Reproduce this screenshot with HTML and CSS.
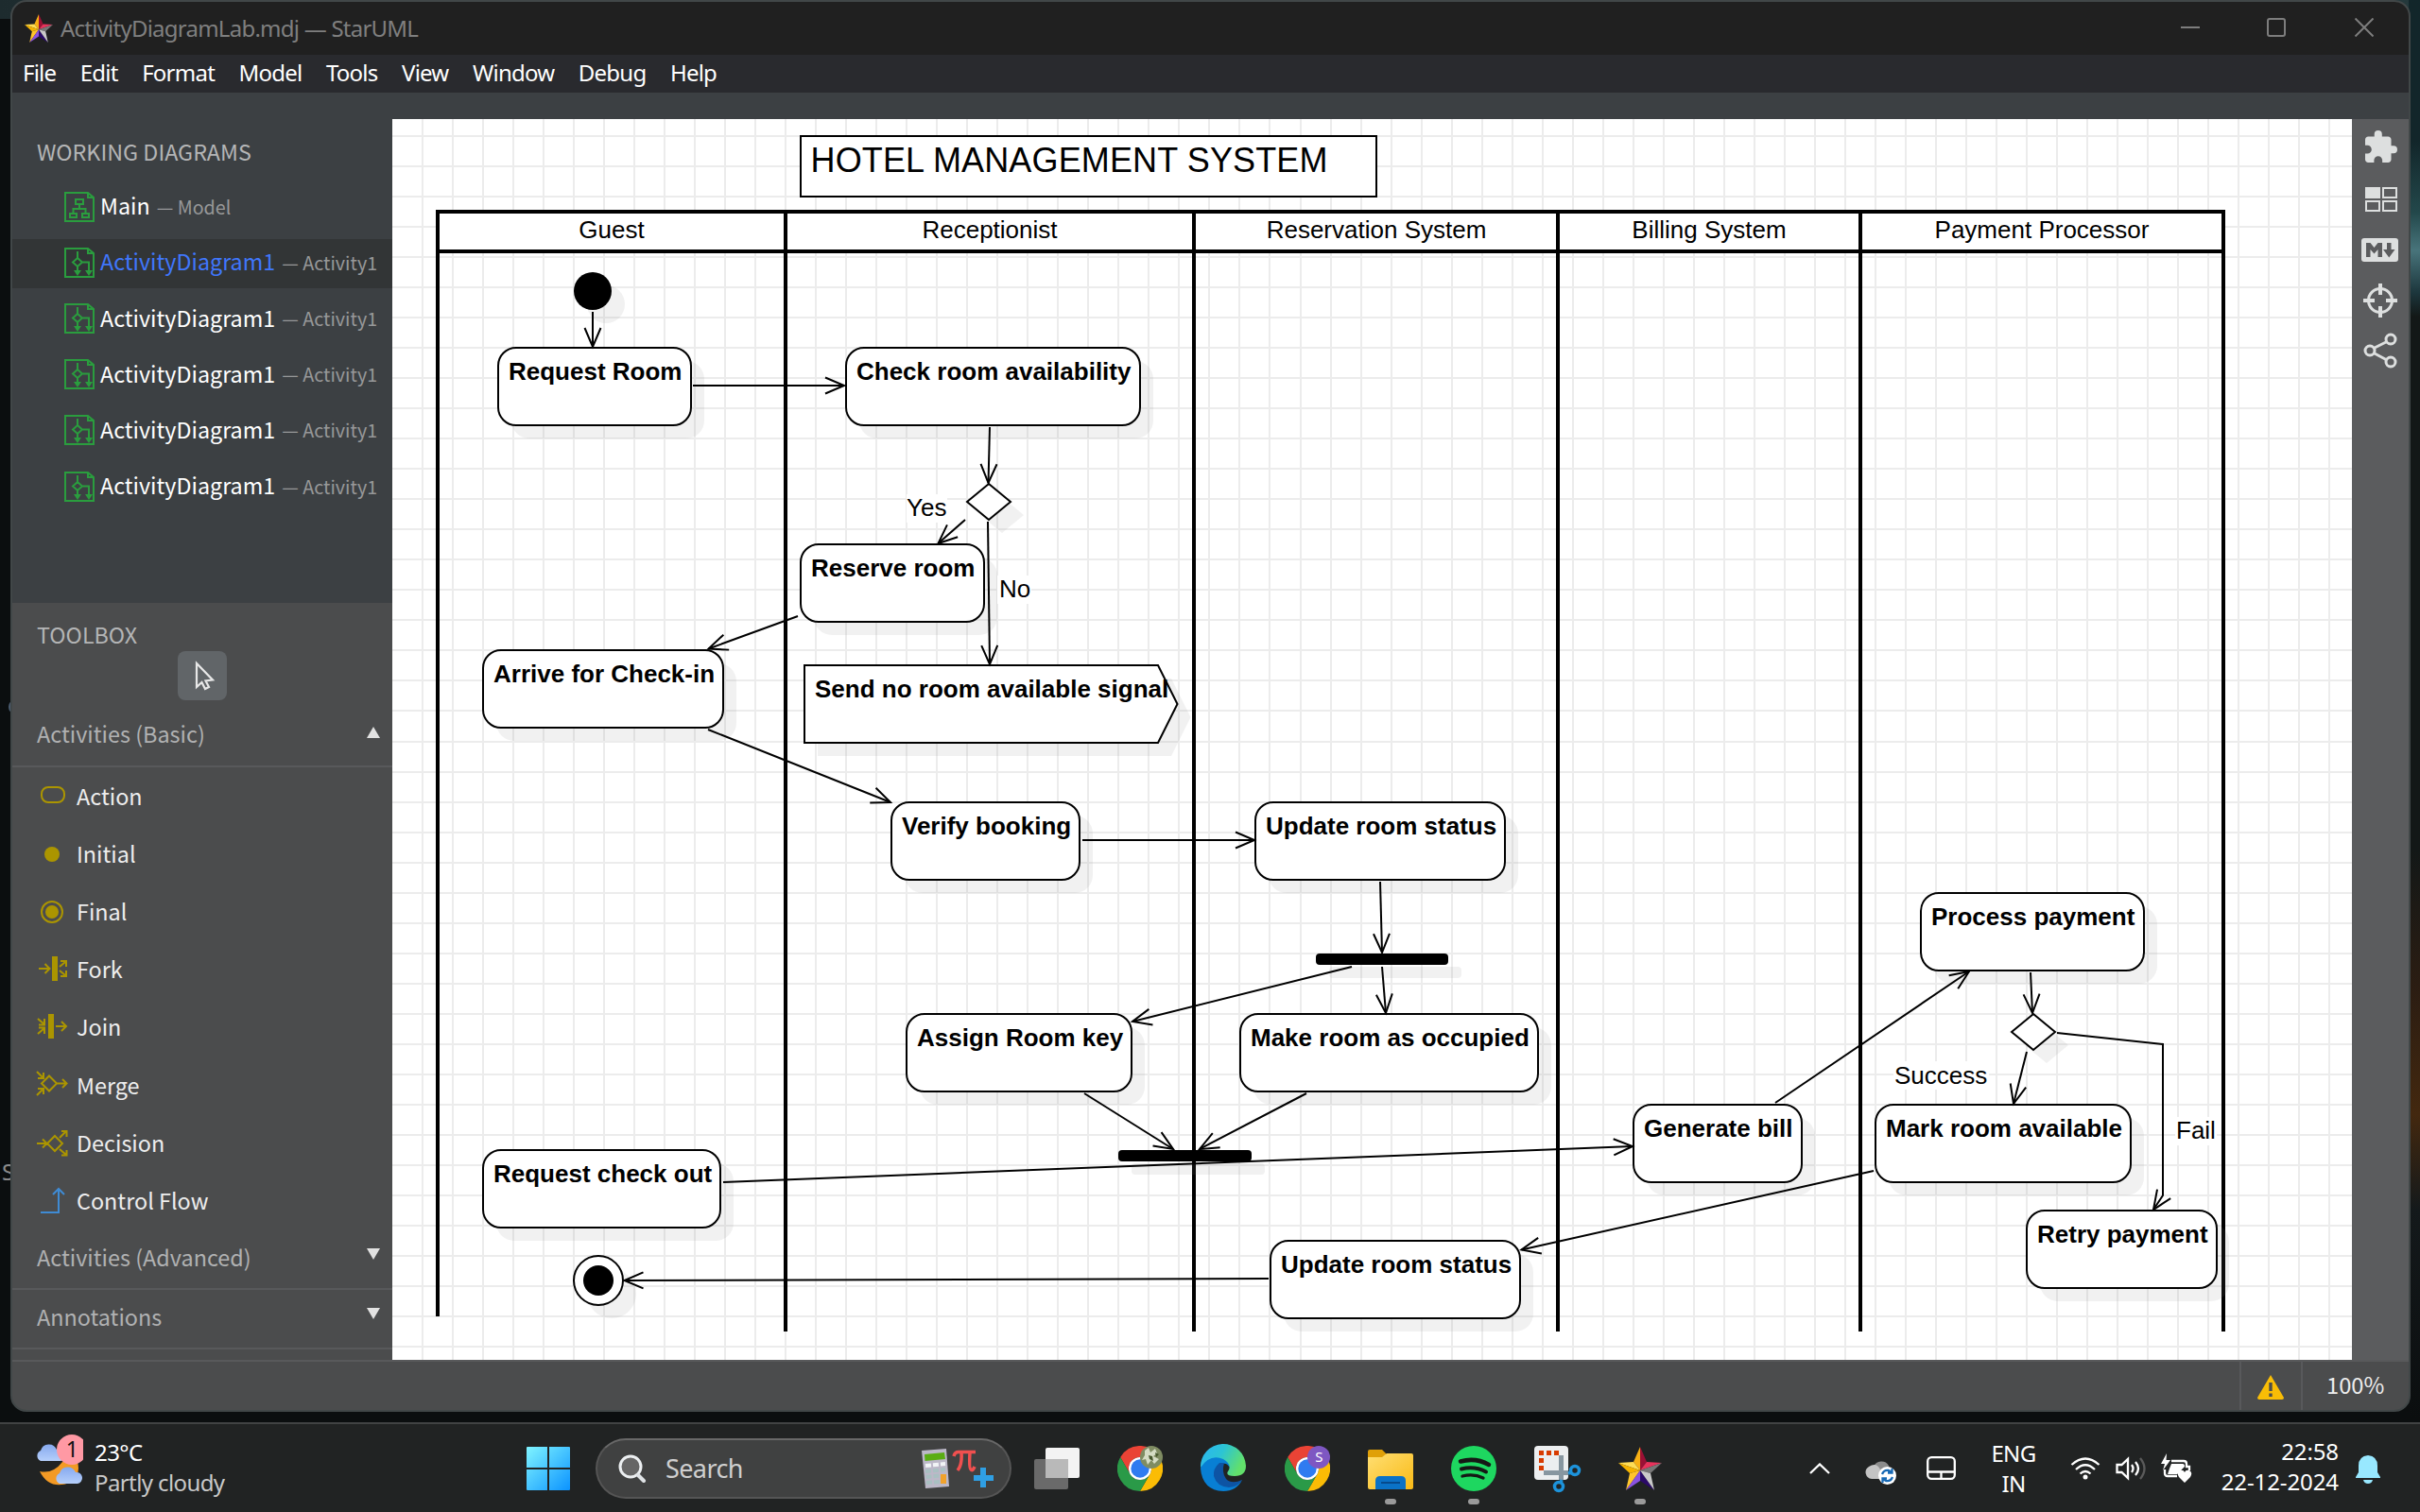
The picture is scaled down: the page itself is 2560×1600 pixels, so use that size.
FILE: index.html
```html
<!DOCTYPE html>
<html lang="en">
<head>
<meta charset="utf-8">
<title>ActivityDiagramLab.mdj — StarUML</title>
<link rel="stylesheet" href="styles.css">
</head>
<body>
<svg class="defs" width="0" height="0" aria-hidden="true">
  <defs>
    <symbol id="star" viewBox="0 0 46 46">
      <path fill="#f9b114" d="M23 0L16 16L23 25Z"/>
      <path fill="#9b1035" d="M23 0L30 16L23 25Z"/>
      <path fill="#fd5" d="M0 17L16 16L23 25Z"/>
      <path fill="#f5b400" d="M0 17L23 25L12 28Z"/>
      <path fill="#e8335c" d="M46 17L30 16L23 25Z"/>
      <path fill="#777" d="M46 17L23 25L34 28Z"/>
      <path fill="#ffc62b" d="M12 28L23 25L8 46Z"/>
      <path fill="#8a52e0" d="M8 46L23 25L23 36Z"/>
      <path fill="#2a0a68" d="M23 25L38 46L23 36Z"/>
      <path fill="#c9c9c9" d="M34 28L23 25L38 46Z"/>
    </symbol>
    <symbol id="activity" viewBox="0 0 32 32">
      <g fill="none" stroke="#2a9d3e" stroke-width="2">
        <path d="M1 1H25L31 6V31H1Z"/><path d="M25 1V6H31"/>
        <path d="M14 4V11M14 11L19 15.500L14 20L9 15.500ZM19 15.500H26V26M14 20V26"/>
      </g>
      <path fill="#2a9d3e" d="M10 24H18L14 30ZM22 24H30L26 30Z"/>
    </symbol>
    <linearGradient id="winblue" x1="0" y1="0" x2="1" y2="1"><stop offset="0" stop-color="#80f4ff"/><stop offset="1" stop-color="#0b93ff"/></linearGradient>
    <linearGradient id="cloud" x1="0" y1="0" x2="0" y2="1"><stop offset="0" stop-color="#86a9ee"/><stop offset="1" stop-color="#b5cffb"/></linearGradient>
    <linearGradient id="edgeA" x1="0" y1="0" x2="1" y2=".4"><stop offset="0" stop-color="#2ab4f5"/><stop offset=".5" stop-color="#2cc4d4"/><stop offset="1" stop-color="#62e06b"/></linearGradient>
    <linearGradient id="folder" x1="0" y1="0" x2="1" y2="1"><stop offset="0" stop-color="#ffdf73"/><stop offset="1" stop-color="#f9ba16"/></linearGradient>
    <symbol id="chrome" viewBox="0 0 48 48">
      <path fill="#ea4335" d="M3.200 12A24 24 0 0 1 44.800 12H24A12 12 0 0 0 13.600 30Z"/>
      <path fill="#fbbc05" d="M44.800 12A24 24 0 0 1 24 48L34.400 30A12 12 0 0 0 24 12Z"/>
      <path fill="#2a9a48" d="M24 48A24 24 0 0 1 3.200 12L13.600 30A12 12 0 0 0 34.400 30Z"/>
      <circle cx="24" cy="24" r="12" fill="#fff"/><circle cx="24" cy="24" r="9.700" fill="#2f7bf0"/>
    </symbol>
  </defs>
</svg>
<div class="desktop">
  <span class="peek peek-ring"></span>
  <span class="peek peek-letter">S</span>

  <section class="window">
    <header class="titlebar">
      <svg class="app-star" viewBox="0 0 46 46"><use href="#star"/></svg>
      <span class="title">ActivityDiagramLab.mdj — StarUML</span>
      <svg class="controls" viewBox="0 0 204 20"><g fill="none" stroke="#7d7d7d" stroke-width="2"><path d="M0 10H20"/><rect x="92" y="1" width="18" height="18" rx="2"/><path d="M184.500 .5L203.500 19.500M203.500 .5L184.500 19.500"/></g></svg>
    </header>
    <nav class="menu"><span>File</span><span>Edit</span><span>Format</span><span>Model</span><span>Tools</span><span>View</span><span>Window</span><span>Debug</span><span>Help</span></nav>
    <div class="strip"></div>
    <main class="workspace">
      <aside class="sidebar">
        <section class="working">
          <h2>WORKING DIAGRAMS</h2>
          <div class="diagram"><svg viewBox="0 0 32 32"><g fill="none" stroke="#2a9d3e" stroke-width="2"><path d="M1 1H25L31 6V31H1Z"/><path d="M25 1V6H31M12 8H20V13H12ZM6 23H13V27H6ZM19 23H26V27H19ZM16 13V18M9.500 23V18H22.500V23"/></g></svg><b>Main</b><i>— Model</i></div>
          <div class="diagram active"><svg><use href="#activity"/></svg><b>ActivityDiagram1</b><i>— Activity1</i></div>
          <div class="diagram"><svg><use href="#activity"/></svg><b>ActivityDiagram1</b><i>— Activity1</i></div>
          <div class="diagram"><svg><use href="#activity"/></svg><b>ActivityDiagram1</b><i>— Activity1</i></div>
          <div class="diagram"><svg><use href="#activity"/></svg><b>ActivityDiagram1</b><i>— Activity1</i></div>
          <div class="diagram"><svg><use href="#activity"/></svg><b>ActivityDiagram1</b><i>— Activity1</i></div>
        </section>
        <section class="toolbox">
          <h2>TOOLBOX</h2>
          <div class="pointer"><svg viewBox="0 0 52 52"><path d="M20 13V38L25.500 33L29 40L33 38L29.500 31.500L37 30.500Z" fill="none" stroke="#e8e8e8" stroke-width="2.200"/></svg></div>
          <div class="group open"><span>Activities (Basic)</span><svg viewBox="0 0 14 12"><path d="M7 0L14 12H0Z"/></svg></div>
          <div class="tools">
            <div class="tool"><svg viewBox="0 0 32 30"><rect x="5" y="5" width="24" height="16" rx="7"/></svg><span>Action</span></div>
            <div class="tool"><svg viewBox="0 0 32 30"><circle class="solid" cx="16" cy="15" r="8"/></svg><span>Initial</span></div>
            <div class="tool"><svg viewBox="0 0 32 30"><circle cx="16" cy="15" r="11"/><circle class="solid" cx="16" cy="15" r="7"/></svg><span>Final</span></div>
            <div class="tool"><svg viewBox="0 0 32 30"><path d="M2 14H13M8.500 9L13.500 14L8.500 19M24 12L30 7M25 6H31V12M24 16L30 21M25 22H31V16"/><path class="solid" d="M16 1H22V27H16Z"/></svg><span>Fork</span></div>
            <div class="tool"><svg viewBox="0 0 32 30"><path d="M1 6L8 12M8 6V12.500H2M1 22L8 16M8 22V15.500H2M20 14H31M26 9L31 14L26 19"/><path class="solid" d="M12 1H18V27H12Z"/></svg><span>Join</span></div>
            <div class="tool"><svg viewBox="0 0 32 30"><path d="M13 4.500L21 12.500L13 20.500L5 12.500ZM21 12.500H31M27 8L31.500 12.500L27 17M0 0L6 6M7 1V7H1M0 25L6 19M7 24V18H1"/></svg><span>Merge</span></div>
            <div class="tool"><svg viewBox="0 0 32 30"><path d="M19 7L27 15L19 23L11 15ZM0 15H11M6 10.500L10.500 15L6 19.500M24 9L31 2M26 2H31.500V8M24 21L31 27M26 27.500H31.500V22"/></svg><span>Decision</span></div>
            <div class="tool flow"><svg viewBox="0 0 32 30"><path d="M4 27H23V2M17 8L23 2L29 8"/></svg><span>Control Flow</span></div>
          </div>
          <div class="group"><span>Activities (Advanced)</span><svg viewBox="0 0 14 12"><path d="M0 0H14L7 12Z"/></svg></div>
          <div class="group"><span>Annotations</span><svg viewBox="0 0 14 12"><path d="M0 0H14L7 12Z"/></svg></div>
        </section>
      </aside>

      <svg class="canvas" viewBox="415 126 2073 1313">
        <defs><marker id="open" markerUnits="userSpaceOnUse" markerWidth="26" markerHeight="24" refX="21" refY="12" orient="auto"><path d="M1 3.500L21 12L1 20.500" fill="none" stroke="#000" stroke-width="2"/></marker></defs>
        <rect x="415" y="126" width="2073" height="1313" fill="#fff"/>
        <g stroke="#ececec" shape-rendering="crispEdges">
          <line x1="446" y1="782.500" x2="2488" y2="782.500" stroke-width="1313" stroke-dasharray="2 30.0175"/>
          <line x1="1451.500" y1="143" x2="1451.500" y2="1439" stroke-width="2073" stroke-dasharray="2 30.025"/>
        </g>
        <rect x="847" y="144" width="609" height="64" class="box"/>
        <text x="857.500" y="182" class="heading">HOTEL MANAGEMENT SYSTEM</text>
        <rect x="463" y="224" width="1889" height="42" fill="#fff"/>
        <path class="lanes" d="M463 1393V224H2352V1409M463 266H2352M831 224V1409M1263 224V1409M1648 224V1409M1968 224V1409"/>
        <g class="lane-name">
          <text x="647" y="252">Guest</text><text x="1047" y="252">Receptionist</text><text x="1456" y="252">Reservation System</text><text x="1808" y="252">Billing System</text><text x="2160" y="252">Payment Processor</text>
        </g>
        <g class="shade">
          <circle cx="641" cy="322" r="20"/><circle cx="647" cy="1369" r="26"/>
          <rect x="541" y="382" width="204" height="82" rx="19"/><rect x="909" y="382" width="311" height="82" rx="19"/><rect x="861" y="590" width="194" height="82" rx="19"/><rect x="525" y="702" width="254" height="82" rx="19"/>
          <path d="M865 718H1239L1259.500 759L1239 800H865Z"/>
          <rect x="957" y="863" width="199" height="82" rx="19"/><rect x="1342" y="863" width="264" height="82" rx="19"/><rect x="973" y="1087" width="238" height="82" rx="19"/><rect x="1326" y="1087" width="315" height="82" rx="19"/><rect x="1358" y="1327" width="264" height="82" rx="19"/><rect x="525" y="1231" width="251" height="82" rx="19"/><rect x="1742" y="1183" width="178" height="82" rx="19"/><rect x="1998" y="1183" width="270" height="82" rx="19"/><rect x="2046" y="959" width="236" height="82" rx="19"/><rect x="2158" y="1295" width="200" height="82" rx="19"/>
          <path d="M1060 526L1083 545L1060 564L1037 545ZM2165 1087L2188 1106L2165 1125L2142 1106Z"/>
          <rect x="1406" y="1023" width="140" height="12" rx="4"/><rect x="1197" y="1231" width="141" height="12" rx="4"/>
        </g>
        <circle cx="627" cy="308" r="20"/>
        <circle cx="633" cy="1355" r="26" class="box"/><circle cx="633" cy="1355" r="16"/>
        <g class="box">
          <rect x="527" y="368" width="204" height="82" rx="19"/><rect x="895" y="368" width="311" height="82" rx="19"/><rect x="847" y="576" width="194" height="82" rx="19"/><rect x="511" y="688" width="254" height="82" rx="19"/>
          <path d="M851 704H1225L1245.500 745L1225 786H851Z"/>
          <rect x="943" y="849" width="199" height="82" rx="19"/><rect x="1328" y="849" width="264" height="82" rx="19"/><rect x="959" y="1073" width="238" height="82" rx="19"/><rect x="1312" y="1073" width="315" height="82" rx="19"/><rect x="1344" y="1313" width="264" height="82" rx="19"/><rect x="511" y="1217" width="251" height="82" rx="19"/><rect x="1728" y="1169" width="178" height="82" rx="19"/><rect x="1984" y="1169" width="270" height="82" rx="19"/><rect x="2032" y="945" width="236" height="82" rx="19"/><rect x="2144" y="1281" width="201" height="82" rx="19"/>
          <path d="M1046 512L1069 531L1046 550L1023 531ZM2151 1073L2174 1092L2151 1111L2128 1092Z"/>
        </g>
        <rect x="1392" y="1009" width="140" height="12" rx="4"/><rect x="1183" y="1217" width="141" height="12" rx="4"/>
        <g class="node-name">
          <text x="538" y="402">Request Room</text><text x="906" y="402">Check room availability</text><text x="858" y="610">Reserve room</text><text x="522" y="722">Arrive for Check-in</text><text x="862" y="738">Send no room available signal</text><text x="954" y="883">Verify booking</text><text x="1339" y="883">Update room status</text><text x="970" y="1107">Assign Room key</text><text x="1323" y="1107">Make room as occupied</text><text x="1355" y="1347">Update room status</text><text x="522" y="1251">Request check out</text><text x="1739" y="1203">Generate bill</text><text x="1995" y="1203">Mark room available</text><text x="2043" y="979">Process payment</text><text x="2155" y="1315">Retry payment</text>
        </g>
        <g fill="#fff"><rect x="959" y="523" width="43" height="30"/><rect x="1055" y="609" width="36" height="30"/><rect x="2003" y="1123" width="101" height="30"/><rect x="2301" y="1182" width="44" height="30"/></g>
        <g class="edge">
          <path d="M627 330V367"/><path d="M733 408H893"/><path d="M1047 452L1045.500 511"/><path d="M1021 550L992.500 575"/><path d="M1045 552L1047 703"/><path d="M844 652L749.500 686.500"/><path d="M749 772L942 849"/><path d="M1145 889H1327"/><path d="M1460 933L1462 1008"/><path d="M1430 1023L1198 1081"/><path d="M1462 1023L1466 1072"/><path d="M1147 1157L1241 1216"/><path d="M1382 1157L1269 1216"/><path d="M765 1251L1727 1213"/><path d="M1878 1167L2083 1028"/><path d="M2148 1029L2150 1072"/><path d="M2144 1113L2130 1168"/><path d="M2176 1093L2288 1105V1265L2278 1280"/><path d="M1982 1239L1609.500 1322.500"/><path d="M1342 1353L660.500 1355"/>
        </g>
        <g class="edge-name"><text x="959" y="546">Yes</text><text x="1057" y="632">No</text><text x="2004" y="1147">Success</text><text x="2302" y="1205">Fail</text></g>
      </svg>

      <aside class="rail">
        <svg width="34" height="34" viewBox="2 1 21 21"><path d="M20.500 11H19V7c0-1.100-.9-2-2-2h-4V3.500a2.500 2.500 0 0 0-5 0V5H4c-1.100 0-1.990.9-1.990 2v3.800H3.500c1.490 0 2.700 1.210 2.700 2.700s-1.210 2.700-2.700 2.700H2V20c0 1.100.9 2 2 2h3.800v-1.500c0-1.490 1.210-2.700 2.700-2.700s2.700 1.210 2.700 2.700V22H17c1.100 0 2-.9 2-2v-4h1.500a2.500 2.500 0 0 0 0-5z"/></svg>
        <svg class="r-grid" width="34" height="26" viewBox="0 0 34 26"><path d="M0 0H16V12H0Z"/><path d="M19 1H33V11H19ZM1 15H15V25H1ZM19 15H33V25H19Z" fill="none" stroke="#dddfdf" stroke-width="2"/></svg>
        <svg class="r-md" width="39" height="25" viewBox="0 0 39 25"><rect width="39" height="25" rx="3"/><path fill="#5b5c5e" d="M5 20V5H9.500L13.500 10L17.500 5H22V20H17.500V12L13.500 16.500L9.500 12V20ZM27 5H31.500V12H35.500L29.250 20.500L23 12H27Z"/></svg>
        <svg class="r-aim" width="36" height="36" viewBox="0 0 36 36"><g fill="none" stroke="#dddfdf"><circle cx="18" cy="18" r="12.500" stroke-width="3"/><path stroke-width="4" d="M18 0V12M18 24V36M0 18H12M24 18H36"/></g></svg>
        <svg class="r-share" width="36" height="38" viewBox="0 0 36 38"><g fill="none" stroke="#dddfdf" stroke-width="3"><circle cx="7" cy="19" r="5"/><circle cx="29" cy="7" r="5"/><circle cx="29" cy="31" r="5"/><path d="M11 16.500L25 9.500M11 21.500L25 29"/></g></svg>
      </aside>
    </main>
    <footer class="status">
      <div class="warn"><svg width="28" height="26" viewBox="0 0 28 26"><path d="M14 0L28 24Q28 26 26 26H2Q0 26 0 24Z" fill="#f9bd06"/><path d="M12.300 8H15.700V17H12.300ZM12.300 19.500H15.700V23H12.300Z" fill="#4b4c4d"/></svg></div>
      <div class="zoom">100%</div>
    </footer>
  </section>

  <footer class="taskbar">
    <div class="weather">
      <svg width="52" height="60" viewBox="36 1514 52 60">
        <path fill="url(#cloud)" d="M43 1545A6 6 0 0 1 43 1534A9 9 0 0 1 60 1533A6 6 0 0 1 64 1545Z"/>
        <path fill="#f39a25" d="M42 1556Q56 1559 66 1546H82Q86 1560 74 1568Q52 1576 42 1556Z"/>
        <path fill="url(#cloud)" d="M63 1569A6 6 0 0 1 63 1558A9 9 0 0 1 80 1557A6 6 0 0 1 82 1569Z"/>
        <circle cx="76" cy="1533" r="16" fill="#ff99a4"/><text x="76" y="1541" class="count">1</text>
      </svg>
      <div class="lines"><span>23°C</span><span class="dim">Partly cloudy</span></div>
    </div>
    <div class="dock">
      <svg class="start" width="46" height="46" viewBox="0 0 46 46"><path fill="url(#winblue)" d="M0 1Q0 0 1 0H22V22H0ZM24 0H45Q46 0 46 1V22H24ZM0 24H22V46H1Q0 46 0 45ZM24 24H46V45Q46 46 45 46H24Z"/></svg>
      <div class="search">
        <svg width="30" height="30" viewBox="0 0 30 30"><circle cx="13" cy="13" r="11" fill="#666" stroke="#eceff1" stroke-width="3"/><path d="M21 22L27 28" stroke="#dfe3e6" stroke-width="4" stroke-linecap="round"/></svg>
        <span>Search</span>
        <svg class="doodle" width="78" height="42" viewBox="0 0 78 42">
          <path fill="#bcb8c8" d="M0 2L26 0L29 40L4 42Z"/><path fill="#5aad14" d="M3 6L24 4L25 11L3.500 13Z"/>
          <path fill="none" stroke="#f1f4f6" stroke-width="4" stroke-dasharray="6 2" d="M4 18L25 16"/><path fill="none" stroke="#a9c0c2" stroke-width="4" stroke-dasharray="6 2" d="M4 24L25 22M4.500 30L19 28.500M5 36L19 35"/><path fill="#f0a22c" d="M20 27H26V37H20Z"/>
          <path fill="none" stroke="#f0504f" stroke-width="3.500" d="M34 8Q35 3.500 39 3.500H57M42 4Q43 17 38 23M51 4Q50 21 52 22Q54 24 56 19"/>
          <path fill="#2f9fe4" d="M62 20H68V28H76V34H68V41H62V34H55V28H62Z"/>
        </svg>
      </div>
      <div class="app"><svg viewBox="0 0 48 48"><rect x="12" y="2" width="36" height="32" rx="2" fill="#f3f3f3"/><rect y="14" width="36" height="32" rx="2" fill="#777" fill-opacity=".85"/><path fill="#b9b9b9" d="M12 14H36V34H12Z"/></svg></div>
      <div class="app"><svg viewBox="0 0 48 48"><use href="#chrome"/><circle cx="36" cy="12" r="12" fill="#7f8c62"/><path fill="#d5dcc5" d="M29 5l4-3 2 5 5-4 2 5-4 3 6 3-5 5-3-4-4 5-2-6-4 1 3-5z"/><path fill="#46572d" d="M33 10l4 1 1 5-4-2zM40 7l4 2-3 3z"/></svg></div>
      <div class="app"><svg viewBox="0 0 48 48">
        <path fill="#087fd4" d="M0 24Q1 13 16 11Q31 11 31 23Q26 15 20 22Q17 35 28 40Q38 44 44 36Q38 48 24 48Q2 47 0 24Z"/>
        <path fill="url(#edgeA)" d="M0 23A24 24 0 0 1 48 21Q48 32 36 32Q26 32 29 27Q34 20 24 14Q10 8 0 23Z"/>
        <path fill="#0d54a4" d="M20 18Q13 24 14 32Q17 43 30 44Q40 43 44 36Q33 41 27 35Q22 28 25 18Z"/>
      </svg></div>
      <div class="app"><svg viewBox="0 0 48 48"><use href="#chrome"/><circle cx="36" cy="12" r="12" fill="#7e57c2"/><text x="36" y="17" class="badge">S</text></svg></div>
      <div class="app running"><svg viewBox="0 0 48 48"><path fill="#e0a008" d="M0 6Q0 4 2 4H15L20 9V14H0Z"/><path fill="url(#folder)" d="M0 12H15L20 8H46Q48 8 48 10V44Q48 46 46 46H2Q0 46 0 44Z"/><path fill="#0a72c7" d="M8 46V37Q8 32 13 32H35Q40 32 40 37V46Z"/><path d="M14 39H34" stroke="#064a8c" stroke-width="2"/></svg></div>
      <div class="app running"><svg viewBox="0 0 48 48"><circle cx="24" cy="24" r="24" fill="#1ed760"/><g fill="none" stroke="#151815" stroke-linecap="round"><path d="M10 16.500Q26 12 40 20" stroke-width="4.500"/><path d="M11 24.500Q25 21 37 27.500" stroke-width="4"/><path d="M12 32Q24 29 34 34" stroke-width="3.300"/></g></svg></div>
      <div class="app"><svg viewBox="0 0 48 48"><rect width="36" height="36" rx="4" fill="#eceef0"/><path fill="none" stroke="#d83b01" stroke-width="5" stroke-dasharray="5 3" d="M7.500 26V7.500H28"/><path stroke="#8796a0" stroke-width="5" d="M28.500 10V36M10 28.500H36"/><g fill="none" stroke="#1d93db" stroke-width="3.500"><circle cx="43" cy="26" r="4.500"/><circle cx="26" cy="43" r="4.500"/><path d="M36 29L40 28M29 36L28 39"/></g></svg></div>
      <div class="app running"><svg viewBox="0 0 48 48"><use href="#star" x="1" y="1" width="46" height="46"/></svg></div>
    </div>
    <div class="tray">
      <svg class="t-up" width="22" height="12" viewBox="0 0 22 12"><path d="M1 11L11 1.500L21 11"/></svg>
      <svg class="t-cloud" width="34" height="28" viewBox="0 0 34 28"><path fill="#8c8c8c" stroke="none" d="M9 9A9 9 0 0 1 25 8L27 14H13Z"/><path fill="#c4c4c4" stroke="none" d="M7 22A7 7 0 0 1 4 9Q12 4 16 12V22Z"/><circle cx="23.500" cy="18.500" r="9.500" fill="#fff" stroke="none"/><path stroke="#1769b5" d="M18 17Q20 12 25 13L28 15M28.500 11V15.500H24M29 20Q27 25 22 24L19 22M18.500 26V21.500H23"/></svg>
      <svg class="t-pad" width="31" height="25" viewBox="0 0 31 25"><rect x="1.200" y="1.200" width="28.600" height="22.600" rx="4"/><path d="M1 16.500H30M15.500 16.500V24"/></svg>
      <div class="lang"><span>ENG</span><span>IN</span></div>
      <svg class="t-wifi" width="32" height="24" viewBox="0 0 32 24"><path d="M1.500 8Q16-5 30.500 8M6 13Q16 3.500 26 13M10.500 17.500Q16 12.500 21.500 17.500"/><circle cx="16" cy="21" r="2.500" fill="#fff" stroke="none"/></svg>
      <svg class="t-vol" width="32" height="28" viewBox="0 0 32 28"><path d="M1.500 10H6.500L13 4V24L6.500 18H1.500ZM17 10Q20 14 17 18M21 7Q27 14 21 21"/><path stroke="#5a5a5a" d="M26 3Q35 14 26 25"/></svg>
      <svg class="t-bat" width="34" height="32" viewBox="0 0 34 32"><path d="M12 8H25Q28 8 28 11V14H31V18M5 17V21Q5 24 8 24H18"/><path fill="#fff" stroke="none" d="M12 11H24Q26 11 26 14L18 22H8L10 16ZM7 0L1 11H5L3 18L11 7H6.500ZM26 31L20 25Q17 20 21 18Q25 17 26 20Q27 17 31 18Q35 20 32 25Z"/></svg>
      <div class="clock"><span>22:58</span><span>22-12-2024</span></div>
      <svg class="t-bell" width="26" height="30" viewBox="0 0 26 30"><path fill="#98e8ff" stroke="none" d="M13 0Q23 1 23 11V18L26 23V24H0V23L3 18V11Q3 1 13 0ZM8 26H18Q17 30 13 30Q9 30 8 26Z"/></svg>
    </div>
  </footer>
</div>
</body>
</html>
```
FILE: styles.css
```css
* { box-sizing: border-box; }
body { margin: 0; overflow: hidden; }
svg { display: block; flex: none; }
.defs { position: absolute; }

.desktop {
  position: relative;
  width: 2560px;
  height: 1600px;
  padding: 0 10px 0 11px;
  display: flex;
  flex-direction: column;
  background:
    linear-gradient(#12262a 0, #12262a 150px, #23484b 225px, #48747b 265px, #1c363c 310px, #131817 335px, #131817 900px, #2c1d12 1050px, #43280f 1180px, #14191b 1280px, #0b0e0f 1500px) right / 12px 100% no-repeat,
    linear-gradient(90deg, #1d2b2e, #34494a 30%, #34494a 70%, #24383b) top / 100% 20px no-repeat,
    #0b0e0f;
}
.peek { position: absolute; }
.peek-ring { left: 9px; top: 741px; width: 12px; height: 14px; border: 2px solid #4a5c70; border-radius: 50%; }
.peek-letter { left: 2px; top: 1225px; color: #8b8b8b; font: 24px/30px "Noto Sans", sans-serif; }

.window {
  position: relative;
  height: 1494px;
  flex: none;
  display: flex;
  flex-direction: column;
  border: 2px solid #414748;
  border-radius: 17px;
  overflow: hidden;
  background: #4b4c4d;
}
.titlebar { height: 56px; flex: none; background: #202020; display: flex; align-items: center; padding: 0 37px 0 12px; }
.app-star { width: 32px; height: 30px; margin-right: 7px; }
.title { font: 24px/40px "Noto Sans", sans-serif; letter-spacing: -.76px; color: #7f7f7f; }
.controls { width: 204px; height: 20px; margin-left: auto; margin-top: -2px; }
.menu { height: 40px; flex: none; background: #292a2e; color: #fff; display: flex; align-items: center; gap: 25.500px; padding: 0 0 2px 11px; font: 24px/38px "Noto Sans", sans-serif; letter-spacing: -.77px; }
.strip { height: 28px; flex: none; background: #3c4043; }

.workspace { height: 1313px; flex: none; display: flex; }
.sidebar { width: 402px; flex: none; background: #4b4c4d; font-family: "Noto Sans CJK SC", sans-serif; }
.sidebar h2 { margin: 0; padding-left: 26px; font-size: 23.300px; line-height: 36px; font-weight: 400; color: #b4b5b6; }
.working { height: 512px; padding-top: 16px; background: #3c4043; display: flex; flex-direction: column; gap: 7.200px; }
.working h2 { height: 36px; margin-bottom: 9px; }
.diagram { height: 52px; flex: none; padding: 0 0 3px 55px; display: flex; align-items: center; white-space: nowrap; }
.diagram svg { width: 32px; height: 32px; margin-right: 6px; }
.diagram b { font-weight: 400; font-size: 23.300px; color: #fff; margin-top: -3px; }
.diagram i { font-style: normal; font-size: 19.700px; color: #979899; margin-left: 7px; margin-top: -1px; }
.active { background: #323536; }
.active b { color: #4077fc; }

.toolbox { padding-top: 15px; }
.pointer { width: 52px; height: 52px; margin: 0 0 0 175px; background: #616568; border-radius: 8px; }
.group { height: 63px; padding: 0 13px 0 26px; border-bottom: 2px solid #58595b; display: flex; align-items: center; justify-content: space-between; font-size: 23.400px; color: #b0b1b2; }
.group span { margin-top: -5px; }
.group svg { width: 14px; height: 12px; fill: #e2e2e2; margin-top: -11px; }
.open { height: 71px; padding-top: 6px; }
.open svg { margin-top: -8px; }
.tool { height: 61.200px; display: flex; align-items: center; padding-left: 26px; font-size: 23.400px; color: #ededed; }
.tool span { margin-top: -2px; }
.tool svg { width: 32px; height: 30px; margin-right: 10px; fill: none; stroke: #ab9500; stroke-width: 2; overflow: visible; }
.tool .solid { fill: #ab9500; stroke: none; }
.tool.flow svg { stroke: #3f8bd4; }

.canvas { width: 2073px; height: 1313px; }
.canvas text { font-family: "Liberation Sans", Arial, sans-serif; font-size: 26px; fill: #000; }
.canvas .heading { font-size: 36px; letter-spacing: .13px; }
.box { fill: #fff; stroke: #000; stroke-width: 2; }
.lanes { fill: none; stroke: #000; stroke-width: 4; }
.lane-name text { text-anchor: middle; }
.node-name text { font-weight: 700; }
.shade { fill: #808080; fill-opacity: .11; }
.edge path { fill: none; stroke: #000; stroke-width: 2; marker-end: url(#open); }

.rail { width: 60px; background: #5b5c5e; display: flex; flex-direction: column; align-items: flex-start; padding: 12px 0 0 14px; fill: #dddfdf; }
.r-grid { margin-top: 26px; }
.r-md { margin: 28px 0 0 -4px; }
.r-aim { margin: 23px 0 0 -2px; }
.r-share { margin: 16px 0 0 -2px; }

.status { flex: 1; border-top: 2px solid #58595b; display: flex; justify-content: flex-end; }
.warn, .zoom { display: flex; align-items: center; border-left: 2px solid #58595b; }
.warn { width: 65px; padding: 3px 0 0 17px; }
.zoom { width: 114px; padding: 0 0 3px 25px; color: #ededed; font: 23.700px/46px "Noto Sans CJK SC", sans-serif; }

.taskbar {
  height: 95px;
  margin: 11px -10px 0 -11px;
  border-top: 2px solid #414343;
  background: #212323;
  display: flex;
  align-items: center;
  color: #fff;
  font: 24px/32px "Noto Sans", sans-serif;
  letter-spacing: -.6px;
}
.weather { width: 557px; padding-left: 36px; display: flex; align-items: flex-start; gap: 12px; }
.weather > svg { margin-top: -8px; }
.lines, .lang, .clock { display: flex; flex-direction: column; }
.lines { margin-top: -2px; }
.dim { color: #c9c9c9; }
.count { font-size: 23px; text-anchor: middle; fill: #111; }
.dock { display: flex; align-items: center; }
.start { margin-right: 27px; }
.search {
  width: 440px;
  height: 64px;
  padding: 0 15px 0 22px;
  margin-right: 24px;
  display: flex;
  align-items: center;
  border: 2px solid #555;
  border-top-color: #686868;
  border-radius: 32px;
  background: #404141;
  color: #cfcfcf;
  font-size: 27px;
}
.search span { margin-left: 20px; }
.doodle { margin-left: auto; }
.app { width: 48px; height: 48px; margin-right: 40.200px; position: relative; flex: none; }
.app svg { width: 48px; height: 48px; overflow: visible; }
.running::after { content: ""; position: absolute; left: 18px; top: 56px; width: 12px; height: 6px; border-radius: 3px; background: #9a9a9a; }
.badge { font-size: 15px; fill: #fff; text-anchor: middle; }
.tray { margin-left: auto; padding-right: 42px; display: flex; align-items: center; }
.tray svg { fill: none; stroke: #fff; stroke-width: 2.300; }
.t-cloud { margin: 6px 0 0 37px; }
.t-pad { margin-left: 31px; }
.lang { width: 44px; margin: 0 38px 0 39px; align-items: center; }
.t-vol { margin-left: 16px; }
.t-bat { margin-left: 15px; }
.clock { width: 128px; margin: -4px 0 0 27px; align-items: flex-end; letter-spacing: -.1px; }
.t-bell { margin-left: 18px; margin-top: 3px; }
```
